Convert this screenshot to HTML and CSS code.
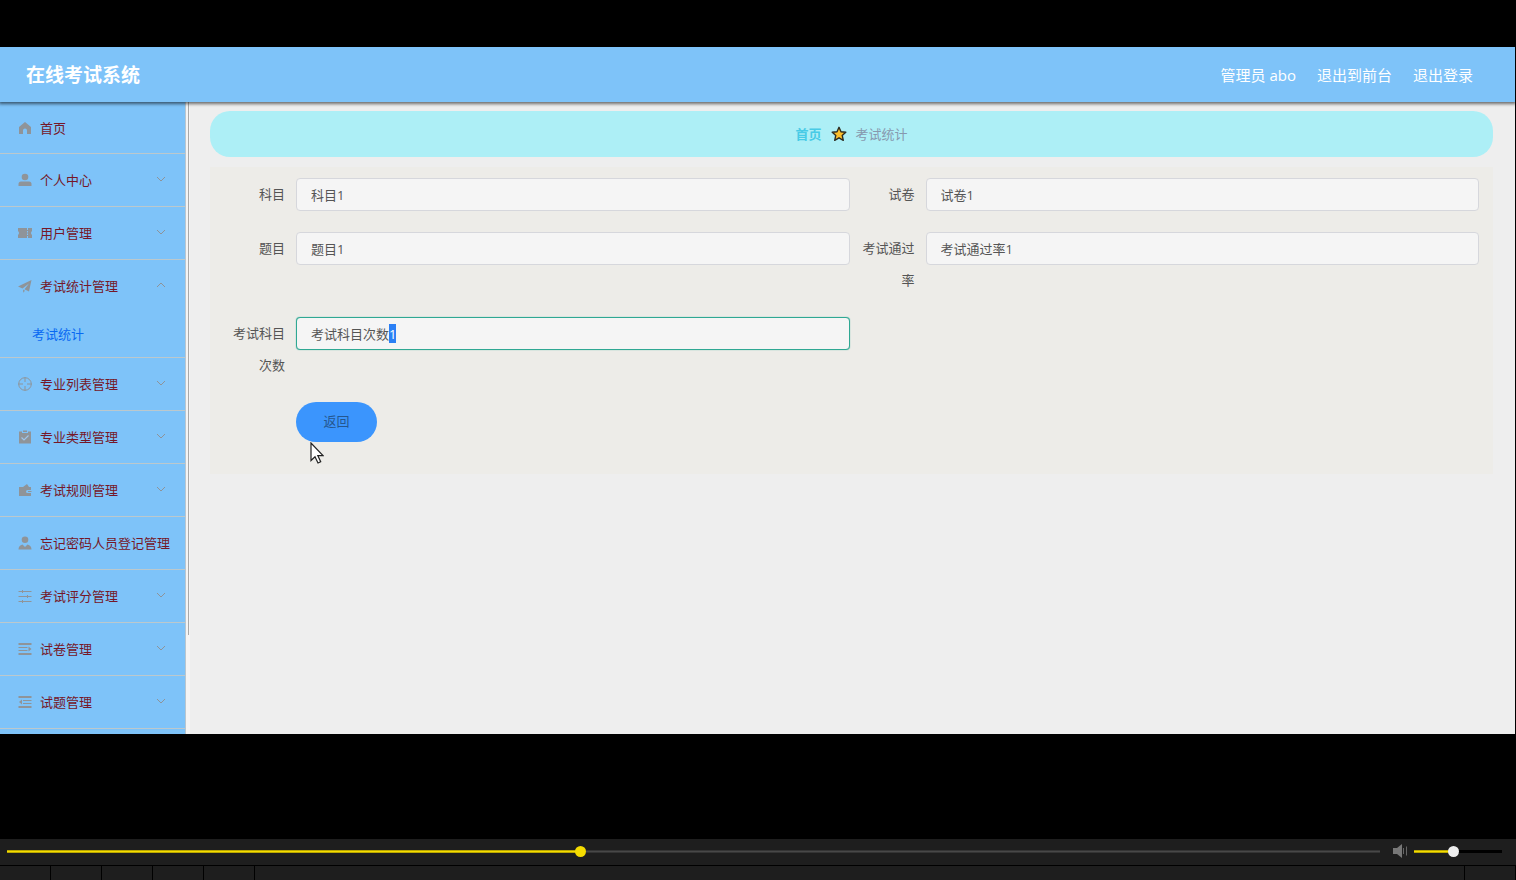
FILE: index.html
```html
<!DOCTYPE html>
<html lang="zh-CN">
<head>
<meta charset="utf-8">
<title>在线考试系统</title>
<link rel="stylesheet" href="styles.css">
</head>
<body>
<svg class="defs" aria-hidden="true">
  <symbol id="down" viewBox="0 0 10 10"><path d="M1 3l4 4 4-4" fill="none" stroke="#8e9399"/></symbol>
  <symbol id="up" viewBox="0 0 10 10"><path d="M1 7l4-4 4 4" fill="none" stroke="#8e9399"/></symbol>
</svg>
<div class="video">
  <div class="app">
    <header class="header">
      <h1 class="logo">在线考试系统</h1>
      <div class="account">
        <span>管理员 abo</span>
        <a href="#">退出到前台</a>
        <a href="#">退出登录</a>
      </div>
    </header>
    <div class="body">
      <aside class="side">
        <nav class="menu">
          <a class="item" href="#"><svg class="icon" viewBox="0 0 14 14"><path d="M7 1l6 5v7H9V9.500a2 2 0 0 0-4 0V13H1V6z"/></svg>首页</a>
          <button class="item" type="button"><svg class="icon" viewBox="0 0 14 14"><circle cx="7" cy="4" r="3.300"/><path d="M.5 13v-2q0-2.500 2.500-2.500h8q2.500 0 2.500 2.500v2z"/></svg>个人中心<svg class="arrow"><use href="#down"/></svg></button>
          <button class="item" type="button"><svg class="icon" viewBox="0 0 14 14"><path d="M0 2h9v2h1V2h4v3q-2 2 0 4v3h-4v-2H9v2H0V9q2-2 0-4zM9 5v1.500h1V5zm0 2.500V9h1V7.500z"/></svg>用户管理<svg class="arrow"><use href="#down"/></svg></button>
          <div class="group">
            <button class="item open" type="button"><svg class="icon" viewBox="0 0 14 14"><path d="M0 7.500L13.500 1 11 12.500 6.500 10.300 11 4.500 4.500 9.500zM5 10.500l2 1.200L5.300 13.800z"/></svg>考试统计管理<svg class="arrow"><use href="#up"/></svg></button>
            <a class="sub" href="#">考试统计</a>
          </div>
          <button class="item" type="button"><svg class="icon line" viewBox="0 0 14 14"><circle cx="7" cy="7" r="6.300"/><path d="M7 .5V5M7 9v4.500M.5 7H5M9 7h4.500"/></svg>专业列表管理<svg class="arrow"><use href="#down"/></svg></button>
          <button class="item" type="button"><svg class="icon" viewBox="0 0 14 14"><path d="M1 1.500h3V3h6V1.500h3v12H1zM5 .5h4V2H5z"/><path d="M3.500 7.500L6 10l4.500-4.500" fill="none" stroke="#9fc6ea" stroke-width="1.200"/></svg>专业类型管理<svg class="arrow"><use href="#down"/></svg></button>
          <button class="item" type="button"><svg class="icon" viewBox="0 0 14 14"><path d="M1 4h4l4-3 2 3h2v3H9.500a1.500 1.500 0 0 0 0 3H13v3H1zM10 8h3.500v1H10z"/></svg>考试规则管理<svg class="arrow"><use href="#down"/></svg></button>
          <button class="item" type="button"><svg class="icon" viewBox="0 0 14 14"><circle cx="7" cy="3.800" r="3.300"/><path d="M.5 13.500q0-4 4-5L7 11l2.500-2.500q4 1 4 5z"/></svg>忘记密码人员登记管理</button>
          <button class="item" type="button"><svg class="icon line" viewBox="0 0 14 14"><path d="M.5 2.500h13M.5 7.500h13M.5 12.500h13M4.500 1v3M9.500 6v3M4.500 11v3"/></svg>考试评分管理<svg class="arrow"><use href="#down"/></svg></button>
          <button class="item" type="button"><svg class="icon line" viewBox="0 0 14 14"><path d="M.5 2h13M.5 12h13" stroke-width="1.800"/><path d="M.5 5.500h9M.5 8.500h9"/><path d="M10.500 4.500l3 2.500-3 2.500z" fill="#8f9499" stroke="none"/></svg>试卷管理<svg class="arrow"><use href="#down"/></svg></button>
          <button class="item" type="button"><svg class="icon line" viewBox="0 0 14 14"><path d="M.5 2h13M.5 12h13" stroke-width="1.800"/><path d="M5 5.500h8.500M5 8.500h8.500"/><path d="M4 4.500L1 7l3 2.500z" fill="#8f9499" stroke="none"/></svg>试题管理<svg class="arrow"><use href="#down"/></svg></button>
        </nav>
        <div class="scroll"><div class="thumb"></div></div>
      </aside>
      <main class="main">
        <nav class="crumbs">
          <a href="#">首页</a>
          <svg class="star" viewBox="0 0 16 16"><path d="M8 1.300l2 4.400 4.800.5-3.600 3.200 1.100 4.900L8 11.800l-4.300 2.500 1.100-4.900L1.200 6.200 6 5.700z" fill="#fcbf2c" stroke="#2c2b20" stroke-width="1.400" stroke-linejoin="round"/></svg>
          <span>考试统计</span>
        </nav>
        <form class="form">
          <div class="field"><label for="subject">科目</label><input id="subject" type="text" value="科目1" readonly></div>
          <div class="field"><label for="paper">试卷</label><input id="paper" type="text" value="试卷1" readonly></div>
          <div class="field"><label for="topic">题目</label><input id="topic" type="text" value="题目1" readonly></div>
          <div class="field"><label for="rate">考试通过率</label><input id="rate" type="text" value="考试通过率1" readonly></div>
          <div class="field"><label for="times">考试科目次数</label><input id="times" class="active" type="text" value="考试科目次数1" readonly></div>
          <div class="actions">
            <button class="back" type="button">返回</button>
            <svg class="pointer" viewBox="0 0 14 22"><path d="M1 1v17.500l4-3.800 3 6.300 2.700-1.300-2.900-6.100H13z" fill="#fff" stroke="#222" stroke-width="1.200"/></svg>
          </div>
        </form>
      </main>
    </div>
  </div>
  <footer class="player">
    <div class="controls">
      <input class="seek" type="range" min="0" max="1000" value="417" aria-label="播放进度">
      <svg class="speaker" viewBox="0 0 15 14"><path d="M0 4h4l5-4v14l-5-4H0z" fill="#777"/><path d="M10.500 4v6M13.500 2.500v9" stroke="#666" fill="none"/></svg>
      <input class="volume" type="range" min="0" max="1000" value="436" aria-label="音量">
    </div>
    <div class="strip"><i></i><i></i><i></i><i></i><i></i><b></b><i></i></div>
  </footer>
</div>
<script src="script.js"></script>
</body>
</html>
```
FILE: styles.css
```css
* { box-sizing: border-box; }
body { margin: 0; background: #000; font: 13px/20px "Open Sans", "Noto Sans CJK SC", sans-serif; color: #555; }
a { color: inherit; text-decoration: none; }
button, input { font: inherit; margin: 0; }
.defs { position: absolute; width: 0; height: 0; }
.video { display: flex; flex-direction: column; height: 100vh; padding-top: 47px; }
.app { flex: 1; min-height: 0; display: flex; flex-direction: column; margin: 0 1px 105px 0; background: #eee; overflow: hidden; }
.header { position: relative; flex: none; display: flex; align-items: center; justify-content: space-between; height: 55px; padding: 0 42px 0 26px; background: #7ec3f9; color: #fff; box-shadow: 0 1px 3px 1px rgba(0, 0, 0, .55); }
.logo { margin: 0; font-size: 19px; line-height: 28px; }
.account { display: flex; gap: 21px; font-size: 15px; }
.body { flex: 1; min-height: 0; display: flex; }
.side { flex: none; display: flex; overflow: hidden; }
.menu { width: 186px; border-right: 1px solid #b9c6cf; background: #7ec3f9; color: #751728; }
.item { display: flex; align-items: center; width: 100%; height: 53px; padding: 0 19px 0 18px; border: 0; border-bottom: 1px solid #bcc8cc; background: none; color: inherit; text-align: left; white-space: nowrap; }
a.item { height: 52px; }
.icon { flex: none; width: 14px; height: 14px; margin-right: 8px; fill: #8f9499; }
.icon.line { fill: none; stroke: #8f9499; }
.arrow { width: 10px; height: 12px; margin-left: auto; padding-bottom: 2px; }
.group { border-bottom: 1px solid #bcc8cc; }
.item.open { height: 51px; border-bottom: 0; }
.sub { display: block; padding-left: 32px; line-height: 46px; color: #0869f2; }
.scroll { width: 4px; padding-left: 2px; background: #f4f4f4; }
.thumb { width: 1px; height: 533px; background: #a9a9a9; }
.main { flex: 1; min-width: 0; padding: 9px 22px 0 20px; }
.crumbs { display: flex; align-items: center; justify-content: center; gap: 9px; height: 46px; border-radius: 20px; background: #adeff6; color: #8798ae; }
.crumbs a { color: #48cbe6; font-weight: bold; }
.star { width: 16px; height: 16px; }
.form { display: grid; grid-template-columns: 1fr 1fr; row-gap: 21px; margin-top: 10px; padding: 11px 14px 32px 10px; background: #edece8; }
.field { display: flex; align-items: flex-start; }
.field label { flex: none; width: 76px; padding: 0 11px; line-height: 32px; text-align: right; }
.field input { flex: 1; min-width: 0; height: 33px; padding: 0 14px; border: 1px solid #d6d7dc; border-radius: 4px; background: #f5f5f5; color: #555; outline: 0; }
.field input.active { border-color: #2fa893; box-shadow: 0 0 1px #2fa893; }
.field input::selection { background: #2b80f5; color: #fff; }
.actions { position: relative; grid-column: 1 / -1; padding-left: 76px; }
.back { display: block; width: 81px; height: 40px; padding: 0 0 2px; border: 0; border-radius: 20px; background: #3b95fd; color: #25578f; }
.pointer { position: absolute; left: 90px; top: 40px; width: 14px; height: 22px; }
.player { flex: none; background: #1e1e1e; }
.controls { display: flex; align-items: center; height: 27px; padding: 0 14px 2px 7px; border-bottom: 1px solid #000; }
.controls input { appearance: none; height: 12px; background: none; }
.seek { flex: 1; min-width: 0; }
.volume { width: 88px; }
.speaker { width: 15px; height: 14px; margin: 0 6px 0 13px; }
.controls input::-webkit-slider-runnable-track { height: 3px; background: linear-gradient(#8f8100, #f5dc00 40%, #f5dc00 60%, #8f8100) 0 0 / 42% 100% no-repeat, linear-gradient(#2a2a2a, #484848, #2a2a2a); }
.controls .volume::-webkit-slider-runnable-track { background: linear-gradient(#8f8100, #f5dc00 40%, #f5dc00 60%, #8f8100) 0 0 / 44% 100% no-repeat, #000; }
.controls input::-webkit-slider-thumb { appearance: none; width: 11px; height: 11px; margin-top: -4px; border-radius: 50%; background: #f5dc00; }
.controls .volume::-webkit-slider-thumb { background: #eee; }
.strip { display: flex; height: 14px; border-right: 1px solid #000; }
.strip i { width: 51px; border-right: 1px solid #000; }
.strip i:last-child { width: 50px; border-right: 0; }
.strip b { flex: 1; border-right: 1px solid #000; }
```
FILE: script.js
```js
const times = document.getElementById("times");
times.focus();
times.setSelectionRange(times.value.length - 1, times.value.length);
```
